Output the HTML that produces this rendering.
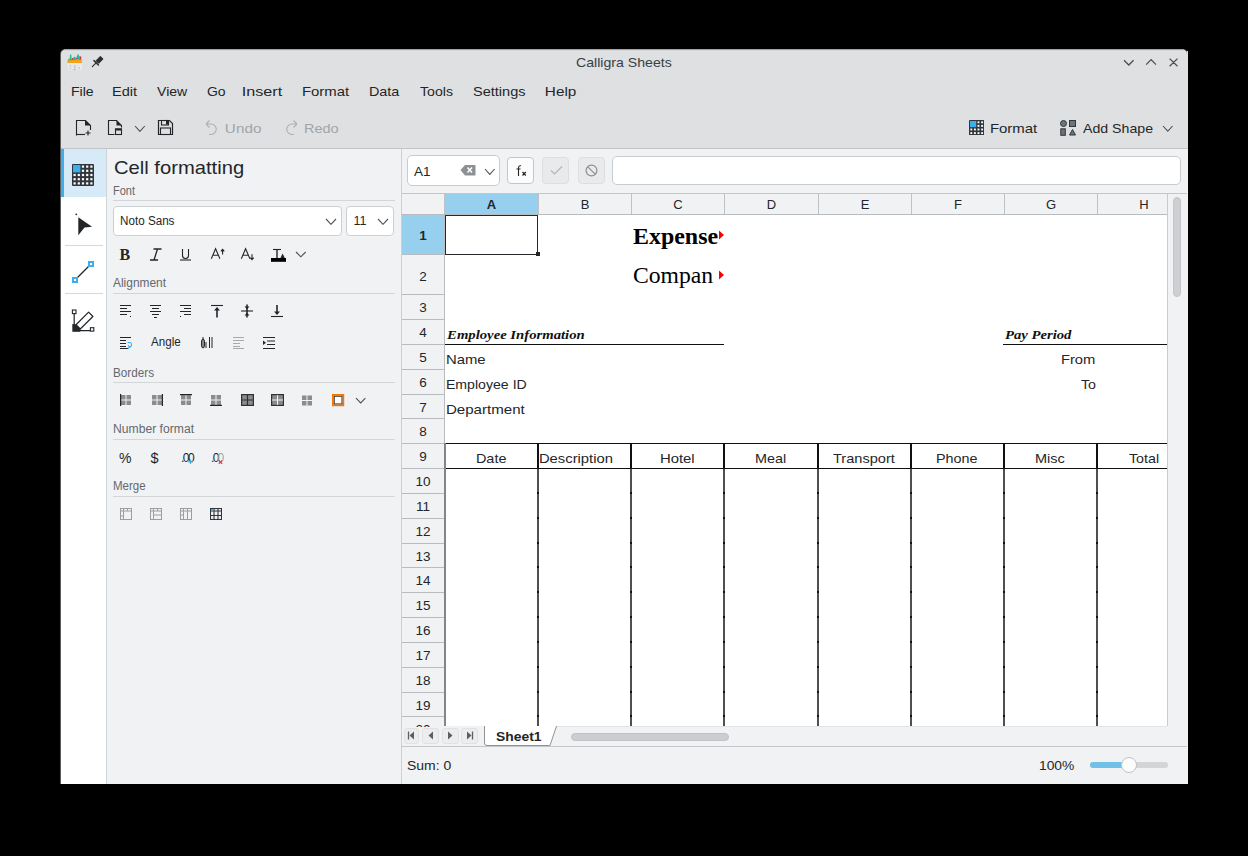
<!DOCTYPE html>
<html><head><meta charset="utf-8"><style>
html,body{margin:0;padding:0}
body{width:1248px;height:856px;background:#000;position:relative;overflow:hidden;font-family:"Liberation Sans",sans-serif}
body>div,body>svg{position:absolute;box-sizing:border-box}
.t{white-space:nowrap}
</style></head><body>
<div style="left:60px;top:49px;width:1128px;height:735px;background:#5a5d60;border-radius:5px 5px 0 0"></div>
<div style="left:61px;top:50px;width:1126px;height:98px;background:#dee0e2;border-radius:4px 4px 0 0"></div>
<div style="left:64px;top:49px;width:1120px;height:1px;background:#a2a4a7"></div>
<div style="left:63px;top:50px;width:1122px;height:1px;background:#d2d4d6"></div>
<div style="left:62px;top:51px;width:1124px;height:1px;background:#e3e4e6"></div>
<div style="left:61px;top:148px;width:1126px;height:1px;background:#c2c5c8"></div>
<div style="left:61px;top:149px;width:45px;height:634px;background:#fff"></div>
<div style="left:106px;top:149px;width:1px;height:634px;background:#d1d4d6"></div>
<div style="left:107px;top:149px;width:294px;height:634px;background:#f1f2f4"></div>
<div style="left:401px;top:149px;width:1px;height:634px;background:#cdd0d3"></div>
<div style="left:402px;top:149px;width:785px;height:634px;background:#f1f2f4"></div>
<div style="left:1187px;top:51px;width:1px;height:97px;background:#dee0e2"></div>
<div style="left:1187px;top:148px;width:1px;height:1px;background:#c2c5c8"></div>
<div style="left:1187px;top:149px;width:1px;height:635px;background:#f1f2f4"></div>
<div style="left:61px;top:783px;width:45px;height:1px;background:#fff"></div>
<div style="left:106px;top:783px;width:1px;height:1px;background:#d1d4d6"></div>
<div style="left:107px;top:783px;width:294px;height:1px;background:#f1f2f4"></div>
<div style="left:401px;top:783px;width:1px;height:1px;background:#cdd0d3"></div>
<div style="left:402px;top:783px;width:786px;height:1px;background:#f1f2f4"></div>
<div style="left:60px;top:783px;width:1px;height:1px;background:#5a5d60"></div>
<div style="left:61px;top:149px;width:45px;height:48px;background:#d6ebf7"></div>
<div style="left:61px;top:149px;width:3px;height:48px;background:#3daee9"></div>
<div style="left:65px;top:245px;width:38px;height:1px;background:#d5d8da"></div>
<div style="left:65px;top:293px;width:38px;height:1px;background:#d5d8da"></div>
<div style="left:113px;top:200px;width:282px;height:1px;background:#d3d6d8"></div>
<div style="left:113px;top:293px;width:282px;height:1px;background:#d3d6d8"></div>
<div style="left:113px;top:382px;width:282px;height:1px;background:#d3d6d8"></div>
<div style="left:113px;top:439px;width:282px;height:1px;background:#d3d6d8"></div>
<div style="left:113px;top:496px;width:282px;height:1px;background:#d3d6d8"></div>
<div style="left:113px;top:206px;width:227px;height:28px;background:#fff;border:1px solid #cdd0d3;border-radius:4px;box-sizing:content-box"></div>
<div style="left:346px;top:206px;width:46px;height:28px;background:#fff;border:1px solid #cdd0d3;border-radius:4px;box-sizing:content-box"></div>
<div style="left:407px;top:155px;width:93px;height:31px;background:#fff;border:1px solid #c9ccce;border-radius:5px"></div>
<div style="left:507px;top:157px;width:27px;height:27px;background:#fcfcfc;border:1px solid #c4c7ca;border-radius:4px"></div>
<div style="left:542px;top:157px;width:27px;height:27px;background:#e9eaeb;border:1px solid #dcdee0;border-radius:4px"></div>
<div style="left:578px;top:157px;width:27px;height:27px;background:#e9eaeb;border:1px solid #dcdee0;border-radius:4px"></div>
<div style="left:612px;top:156px;width:569px;height:29px;background:#fff;border:1px solid #c9ccce;border-radius:5px"></div>
<div style="left:402px;top:194px;width:765px;height:20px;background:#f1f2f4"></div>
<div style="left:402px;top:193px;width:785px;height:1px;background:#c4c7ca"></div>
<div style="left:401px;top:214px;width:766px;height:1px;background:#b9bcbf"></div>
<div style="left:445px;top:194px;width:93px;height:20px;background:#97d0ee"></div>
<div style="left:538px;top:194px;width:1px;height:20px;background:#bfc2c5"></div>
<div style="left:631px;top:194px;width:1px;height:20px;background:#bfc2c5"></div>
<div style="left:724px;top:194px;width:1px;height:20px;background:#bfc2c5"></div>
<div style="left:818px;top:194px;width:1px;height:20px;background:#bfc2c5"></div>
<div style="left:911px;top:194px;width:1px;height:20px;background:#bfc2c5"></div>
<div style="left:1004px;top:194px;width:1px;height:20px;background:#bfc2c5"></div>
<div style="left:1097px;top:194px;width:1px;height:20px;background:#bfc2c5"></div>
<div style="left:444px;top:194px;width:1px;height:20px;background:#bfc2c5"></div>
<div style="left:402px;top:215px;width:42px;height:511px;background:#f1f2f4"></div>
<div style="left:444px;top:215px;width:1px;height:511px;background:#b9bcbf"></div>
<div style="left:402px;top:215px;width:42px;height:39px;background:#97d0ee"></div>
<div style="left:402px;top:254px;width:42px;height:1px;background:#b9bcbf"></div>
<div style="left:402px;top:294px;width:42px;height:1px;background:#b9bcbf"></div>
<div style="left:402px;top:319px;width:42px;height:1px;background:#b9bcbf"></div>
<div style="left:402px;top:344px;width:42px;height:1px;background:#b9bcbf"></div>
<div style="left:402px;top:369px;width:42px;height:1px;background:#b9bcbf"></div>
<div style="left:402px;top:394px;width:42px;height:1px;background:#b9bcbf"></div>
<div style="left:402px;top:418px;width:42px;height:1px;background:#b9bcbf"></div>
<div style="left:402px;top:443px;width:42px;height:1px;background:#b9bcbf"></div>
<div style="left:402px;top:468px;width:42px;height:1px;background:#b9bcbf"></div>
<div style="left:402px;top:493px;width:42px;height:1px;background:#b9bcbf"></div>
<div style="left:402px;top:518px;width:42px;height:1px;background:#b9bcbf"></div>
<div style="left:402px;top:543px;width:42px;height:1px;background:#b9bcbf"></div>
<div style="left:402px;top:567px;width:42px;height:1px;background:#b9bcbf"></div>
<div style="left:402px;top:592px;width:42px;height:1px;background:#b9bcbf"></div>
<div style="left:402px;top:617px;width:42px;height:1px;background:#b9bcbf"></div>
<div style="left:402px;top:642px;width:42px;height:1px;background:#b9bcbf"></div>
<div style="left:402px;top:667px;width:42px;height:1px;background:#b9bcbf"></div>
<div style="left:402px;top:692px;width:42px;height:1px;background:#b9bcbf"></div>
<div style="left:402px;top:716px;width:42px;height:1px;background:#b9bcbf"></div>
<div style="left:445px;top:215px;width:722px;height:511px;background:#fff"></div>
<div style="left:1167px;top:194px;width:1px;height:532px;background:#c9ccce"></div>
<div style="left:1173px;top:197px;width:8px;height:100px;background:#cdcfd2;border:1px solid #c3c5c8;border-radius:4px"></div>
<div class="t" style="left:445px;top:195px;width:93px;height:20px;line-height:20px;text-align:center;font-size:13px;font-weight:bold;color:#232629">A</div>
<div class="t" style="left:539px;top:195px;width:92px;height:20px;line-height:20px;text-align:center;font-size:13px;font-weight:normal;color:#232629">B</div>
<div class="t" style="left:632px;top:195px;width:92px;height:20px;line-height:20px;text-align:center;font-size:13px;font-weight:normal;color:#232629">C</div>
<div class="t" style="left:725px;top:195px;width:93px;height:20px;line-height:20px;text-align:center;font-size:13px;font-weight:normal;color:#232629">D</div>
<div class="t" style="left:819px;top:195px;width:92px;height:20px;line-height:20px;text-align:center;font-size:13px;font-weight:normal;color:#232629">E</div>
<div class="t" style="left:912px;top:195px;width:92px;height:20px;line-height:20px;text-align:center;font-size:13px;font-weight:normal;color:#232629">F</div>
<div class="t" style="left:1005px;top:195px;width:92px;height:20px;line-height:20px;text-align:center;font-size:13px;font-weight:normal;color:#232629">G</div>
<div class="t" style="left:1098px;top:195px;width:92px;height:20px;line-height:20px;text-align:center;font-size:13px;font-weight:normal;color:#232629">H</div>
<div class="t" style="left:402px;top:216.0px;width:42px;height:40.5px;line-height:40.5px;text-align:center;font-size:13.5px;font-weight:bold;color:#232629;overflow:hidden;clip-path:inset(0 0 0.0px 0)">1</div>
<div class="t" style="left:402px;top:256.5px;width:42px;height:39.8px;line-height:39.8px;text-align:center;font-size:13.5px;font-weight:normal;color:#232629;overflow:hidden;clip-path:inset(0 0 0.0px 0)">2</div>
<div class="t" style="left:402px;top:296.3px;width:42px;height:24.8px;line-height:24.8px;text-align:center;font-size:13.5px;font-weight:normal;color:#232629;overflow:hidden;clip-path:inset(0 0 0.0px 0)">3</div>
<div class="t" style="left:402px;top:321.1px;width:42px;height:24.8px;line-height:24.8px;text-align:center;font-size:13.5px;font-weight:normal;color:#232629;overflow:hidden;clip-path:inset(0 0 0.0px 0)">4</div>
<div class="t" style="left:402px;top:346.0px;width:42px;height:24.8px;line-height:24.8px;text-align:center;font-size:13.5px;font-weight:normal;color:#232629;overflow:hidden;clip-path:inset(0 0 0.0px 0)">5</div>
<div class="t" style="left:402px;top:370.8px;width:42px;height:24.8px;line-height:24.8px;text-align:center;font-size:13.5px;font-weight:normal;color:#232629;overflow:hidden;clip-path:inset(0 0 0.0px 0)">6</div>
<div class="t" style="left:402px;top:395.6px;width:42px;height:24.8px;line-height:24.8px;text-align:center;font-size:13.5px;font-weight:normal;color:#232629;overflow:hidden;clip-path:inset(0 0 0.0px 0)">7</div>
<div class="t" style="left:402px;top:420.4px;width:42px;height:24.8px;line-height:24.8px;text-align:center;font-size:13.5px;font-weight:normal;color:#232629;overflow:hidden;clip-path:inset(0 0 0.0px 0)">8</div>
<div class="t" style="left:402px;top:445.3px;width:42px;height:24.8px;line-height:24.8px;text-align:center;font-size:13.5px;font-weight:normal;color:#232629;overflow:hidden;clip-path:inset(0 0 0.0px 0)">9</div>
<div class="t" style="left:402px;top:470.1px;width:42px;height:24.8px;line-height:24.8px;text-align:center;font-size:13.5px;font-weight:normal;color:#232629;overflow:hidden;clip-path:inset(0 0 0.0px 0)">10</div>
<div class="t" style="left:402px;top:494.9px;width:42px;height:24.8px;line-height:24.8px;text-align:center;font-size:13.5px;font-weight:normal;color:#232629;overflow:hidden;clip-path:inset(0 0 0.0px 0)">11</div>
<div class="t" style="left:402px;top:519.8px;width:42px;height:24.8px;line-height:24.8px;text-align:center;font-size:13.5px;font-weight:normal;color:#232629;overflow:hidden;clip-path:inset(0 0 0.0px 0)">12</div>
<div class="t" style="left:402px;top:544.6px;width:42px;height:24.8px;line-height:24.8px;text-align:center;font-size:13.5px;font-weight:normal;color:#232629;overflow:hidden;clip-path:inset(0 0 0.0px 0)">13</div>
<div class="t" style="left:402px;top:569.4px;width:42px;height:24.8px;line-height:24.8px;text-align:center;font-size:13.5px;font-weight:normal;color:#232629;overflow:hidden;clip-path:inset(0 0 0.0px 0)">14</div>
<div class="t" style="left:402px;top:594.3px;width:42px;height:24.8px;line-height:24.8px;text-align:center;font-size:13.5px;font-weight:normal;color:#232629;overflow:hidden;clip-path:inset(0 0 0.0px 0)">15</div>
<div class="t" style="left:402px;top:619.1px;width:42px;height:24.8px;line-height:24.8px;text-align:center;font-size:13.5px;font-weight:normal;color:#232629;overflow:hidden;clip-path:inset(0 0 0.0px 0)">16</div>
<div class="t" style="left:402px;top:643.9px;width:42px;height:24.8px;line-height:24.8px;text-align:center;font-size:13.5px;font-weight:normal;color:#232629;overflow:hidden;clip-path:inset(0 0 0.0px 0)">17</div>
<div class="t" style="left:402px;top:668.8px;width:42px;height:24.8px;line-height:24.8px;text-align:center;font-size:13.5px;font-weight:normal;color:#232629;overflow:hidden;clip-path:inset(0 0 0.0px 0)">18</div>
<div class="t" style="left:402px;top:693.6px;width:42px;height:24.8px;line-height:24.8px;text-align:center;font-size:13.5px;font-weight:normal;color:#232629;overflow:hidden;clip-path:inset(0 0 0.0px 0)">19</div>
<div class="t" style="left:402px;top:718.4px;width:42px;height:24.8px;line-height:24.8px;text-align:center;font-size:13.5px;font-weight:normal;color:#232629;overflow:hidden;clip-path:inset(0 0 16.2px 0)">20</div>
<div style="left:445px;top:343.5px;width:279px;height:1.5px;background:#111"></div>
<div style="left:1003px;top:343.5px;width:164px;height:1.5px;background:#111"></div>
<div style="left:445px;top:442.5px;width:722px;height:1.5px;background:#111"></div>
<div style="left:445px;top:467.7px;width:722px;height:1.5px;background:#111"></div>
<div style="left:444.3px;top:442.5px;width:1.7px;height:283.5px;background:#858585"></div>
<div style="left:537px;top:443px;width:2px;height:25.5px;background:#111"></div>
<div style="left:537px;top:469px;width:2px;height:257px;background:#505050"></div>
<div style="left:537px;top:492px;width:2px;height:2px;background:#111"></div>
<div style="left:537px;top:517px;width:2px;height:2px;background:#111"></div>
<div style="left:537px;top:542px;width:2px;height:2px;background:#111"></div>
<div style="left:537px;top:566px;width:2px;height:2px;background:#111"></div>
<div style="left:537px;top:591px;width:2px;height:2px;background:#111"></div>
<div style="left:537px;top:616px;width:2px;height:2px;background:#111"></div>
<div style="left:537px;top:641px;width:2px;height:2px;background:#111"></div>
<div style="left:537px;top:666px;width:2px;height:2px;background:#111"></div>
<div style="left:537px;top:691px;width:2px;height:2px;background:#111"></div>
<div style="left:537px;top:715px;width:2px;height:2px;background:#111"></div>
<div style="left:630px;top:443px;width:2px;height:25.5px;background:#111"></div>
<div style="left:630px;top:469px;width:2px;height:257px;background:#505050"></div>
<div style="left:630px;top:492px;width:2px;height:2px;background:#111"></div>
<div style="left:630px;top:517px;width:2px;height:2px;background:#111"></div>
<div style="left:630px;top:542px;width:2px;height:2px;background:#111"></div>
<div style="left:630px;top:566px;width:2px;height:2px;background:#111"></div>
<div style="left:630px;top:591px;width:2px;height:2px;background:#111"></div>
<div style="left:630px;top:616px;width:2px;height:2px;background:#111"></div>
<div style="left:630px;top:641px;width:2px;height:2px;background:#111"></div>
<div style="left:630px;top:666px;width:2px;height:2px;background:#111"></div>
<div style="left:630px;top:691px;width:2px;height:2px;background:#111"></div>
<div style="left:630px;top:715px;width:2px;height:2px;background:#111"></div>
<div style="left:723px;top:443px;width:2px;height:25.5px;background:#111"></div>
<div style="left:723px;top:469px;width:2px;height:257px;background:#505050"></div>
<div style="left:723px;top:492px;width:2px;height:2px;background:#111"></div>
<div style="left:723px;top:517px;width:2px;height:2px;background:#111"></div>
<div style="left:723px;top:542px;width:2px;height:2px;background:#111"></div>
<div style="left:723px;top:566px;width:2px;height:2px;background:#111"></div>
<div style="left:723px;top:591px;width:2px;height:2px;background:#111"></div>
<div style="left:723px;top:616px;width:2px;height:2px;background:#111"></div>
<div style="left:723px;top:641px;width:2px;height:2px;background:#111"></div>
<div style="left:723px;top:666px;width:2px;height:2px;background:#111"></div>
<div style="left:723px;top:691px;width:2px;height:2px;background:#111"></div>
<div style="left:723px;top:715px;width:2px;height:2px;background:#111"></div>
<div style="left:816.5px;top:443px;width:2px;height:25.5px;background:#111"></div>
<div style="left:816.5px;top:469px;width:2px;height:257px;background:#505050"></div>
<div style="left:816.5px;top:492px;width:2px;height:2px;background:#111"></div>
<div style="left:816.5px;top:517px;width:2px;height:2px;background:#111"></div>
<div style="left:816.5px;top:542px;width:2px;height:2px;background:#111"></div>
<div style="left:816.5px;top:566px;width:2px;height:2px;background:#111"></div>
<div style="left:816.5px;top:591px;width:2px;height:2px;background:#111"></div>
<div style="left:816.5px;top:616px;width:2px;height:2px;background:#111"></div>
<div style="left:816.5px;top:641px;width:2px;height:2px;background:#111"></div>
<div style="left:816.5px;top:666px;width:2px;height:2px;background:#111"></div>
<div style="left:816.5px;top:691px;width:2px;height:2px;background:#111"></div>
<div style="left:816.5px;top:715px;width:2px;height:2px;background:#111"></div>
<div style="left:910px;top:443px;width:2px;height:25.5px;background:#111"></div>
<div style="left:910px;top:469px;width:2px;height:257px;background:#505050"></div>
<div style="left:910px;top:492px;width:2px;height:2px;background:#111"></div>
<div style="left:910px;top:517px;width:2px;height:2px;background:#111"></div>
<div style="left:910px;top:542px;width:2px;height:2px;background:#111"></div>
<div style="left:910px;top:566px;width:2px;height:2px;background:#111"></div>
<div style="left:910px;top:591px;width:2px;height:2px;background:#111"></div>
<div style="left:910px;top:616px;width:2px;height:2px;background:#111"></div>
<div style="left:910px;top:641px;width:2px;height:2px;background:#111"></div>
<div style="left:910px;top:666px;width:2px;height:2px;background:#111"></div>
<div style="left:910px;top:691px;width:2px;height:2px;background:#111"></div>
<div style="left:910px;top:715px;width:2px;height:2px;background:#111"></div>
<div style="left:1003px;top:443px;width:2px;height:25.5px;background:#111"></div>
<div style="left:1003px;top:469px;width:2px;height:257px;background:#505050"></div>
<div style="left:1003px;top:492px;width:2px;height:2px;background:#111"></div>
<div style="left:1003px;top:517px;width:2px;height:2px;background:#111"></div>
<div style="left:1003px;top:542px;width:2px;height:2px;background:#111"></div>
<div style="left:1003px;top:566px;width:2px;height:2px;background:#111"></div>
<div style="left:1003px;top:591px;width:2px;height:2px;background:#111"></div>
<div style="left:1003px;top:616px;width:2px;height:2px;background:#111"></div>
<div style="left:1003px;top:641px;width:2px;height:2px;background:#111"></div>
<div style="left:1003px;top:666px;width:2px;height:2px;background:#111"></div>
<div style="left:1003px;top:691px;width:2px;height:2px;background:#111"></div>
<div style="left:1003px;top:715px;width:2px;height:2px;background:#111"></div>
<div style="left:1096px;top:443px;width:2px;height:25.5px;background:#111"></div>
<div style="left:1096px;top:469px;width:2px;height:257px;background:#505050"></div>
<div style="left:1096px;top:492px;width:2px;height:2px;background:#111"></div>
<div style="left:1096px;top:517px;width:2px;height:2px;background:#111"></div>
<div style="left:1096px;top:542px;width:2px;height:2px;background:#111"></div>
<div style="left:1096px;top:566px;width:2px;height:2px;background:#111"></div>
<div style="left:1096px;top:591px;width:2px;height:2px;background:#111"></div>
<div style="left:1096px;top:616px;width:2px;height:2px;background:#111"></div>
<div style="left:1096px;top:641px;width:2px;height:2px;background:#111"></div>
<div style="left:1096px;top:666px;width:2px;height:2px;background:#111"></div>
<div style="left:1096px;top:691px;width:2px;height:2px;background:#111"></div>
<div style="left:1096px;top:715px;width:2px;height:2px;background:#111"></div>
<div style="left:445px;top:215px;width:93px;height:39.5px;border:1.5px solid #25292d;box-sizing:border-box"></div>
<div style="left:536px;top:252px;width:4px;height:4px;background:#232629"></div>
<svg style="position:absolute;left:718px;top:230px" width="7" height="10"><path d="M1 0.5 L6 5 L1 9.5Z" fill="#f00"/></svg>
<svg style="position:absolute;left:718px;top:270px" width="7" height="10"><path d="M1 0.5 L6 5 L1 9.5Z" fill="#f00"/></svg>
<div style="left:557px;top:726px;width:610px;height:1px;background:#e2e4e6"></div>
<div style="left:401px;top:746px;width:786px;height:1px;background:#c4c7ca"></div>
<div style="left:403.6px;top:727.5px;width:15.699999999999989px;height:16.7px;background:#eceded;border:1px solid #dfe1e3;border-radius:3px;box-sizing:border-box"></div>
<div style="left:422.3px;top:727.5px;width:16.69999999999999px;height:16.7px;background:#eceded;border:1px solid #dfe1e3;border-radius:3px;box-sizing:border-box"></div>
<div style="left:442px;top:727.5px;width:17px;height:16.7px;background:#eceded;border:1px solid #dfe1e3;border-radius:3px;box-sizing:border-box"></div>
<div style="left:461.4px;top:727.5px;width:16.600000000000023px;height:16.7px;background:#eceded;border:1px solid #dfe1e3;border-radius:3px;box-sizing:border-box"></div>
<svg style="position:absolute;left:480px;top:725px" width="80" height="22"><path d="M4.5 1 V18 Q4.5 20.5 7 20.5 H70 L76.5 1" fill="#fff" stroke="#8f9296" stroke-width="1"/></svg>
<div style="left:571px;top:732.5px;width:157.5px;height:8px;background:#cbcdd0;border:1px solid #c0c3c6;border-radius:5px;box-sizing:border-box"></div>
<div style="left:1089.7px;top:762px;width:78px;height:5.5px;background:#d3d5d7;border-radius:3px"></div>
<div style="left:1089.7px;top:762px;width:40px;height:5.5px;background:#71c0e8;border-radius:3px 0 0 3px"></div>
<div style="left:1120.5px;top:756.5px;width:16px;height:16px;box-sizing:border-box;border-radius:50%;background:#fcfcfc;border:1px solid #c0c3c6"></div>
<svg style="position:absolute;left:67px;top:54px;" width="16" height="17" viewBox="0 0 16 17"><rect x="0.3" y="8.8" width="15" height="8" rx="0.5" fill="#eceef0" stroke="#d5d8db" stroke-width="0.6"/><path d="M1.5 11h12.5M1.5 13.2h12.5M1.5 15.3h12.5M5 9.5v6.5M10 9.5v6.5" stroke="#d9dcdf" stroke-width="0.5"/><path d="M2.5 11.8h1.2M7 12h1.5M11.5 14h1.5M6.5 15.6h2" stroke="#e36d75" stroke-width="0.7"/><path d="M7 13.8h1.5M2.5 14.2h1" stroke="#58c79c" stroke-width="0.7"/><path d="M0.8 9 V5.5 L2.5 4.8 L3.2 0.6 L4.3 0.6 L4.6 5 L7 3.2 L8.3 2.6 L8.8 5 L10.6 0.6 L11.9 0.6 L12.2 6 L12.5 9Z" fill="#1dbf97"/><path d="M5 9 V4.2 L6.5 4 V9Z M9 9 V4.3 L10.6 4 V9Z M12.3 9 V2.2 L14.3 2.6 V9Z" fill="#d9374b"/><path d="M0.8 9 V6.8 L2.6 5.8 L4.6 6.6 L6.3 5.4 L8.2 6.3 L10.2 5 L12.5 5.8 L14.4 5.4 V9Z" fill="#f7a21b"/></svg>
<svg style="position:absolute;left:91px;top:56px;" width="13" height="12" viewBox="0 0 13 12"><g transform="translate(8.4 4) rotate(45)"><rect x="-2.2" y="-3.6" width="4.4" height="6.8" rx="0.6" fill="#2b2f33"/></g><path d="M3 4.6 L7.4 9" stroke="#2b2f33" stroke-width="1.5" stroke-linecap="round"/><path d="M4.6 7.3 L1.3 10.6" stroke="#2b2f33" stroke-width="1.2" stroke-linecap="round"/></svg>
<svg style="position:absolute;left:1120px;top:56px;" width="60" height="13" viewBox="0 0 60 13"><path d="M4 4.2 L8.8 9 L13.6 4.2 M26.2 8.6 L31.1 3.6 L36 8.6 M49.6 2.6 L57.5 10.3 M57.5 2.6 L49.6 10.3" fill="none" stroke="#4a4f54" stroke-width="1.25"/></svg>
<svg style="position:absolute;left:75px;top:119px;" width="17" height="17" viewBox="0 0 17 17"><path d="M1.5 16.5 V1.5 H10.5 L15.5 6.5 V11" fill="none" stroke="#232629" stroke-width="1.1"/><path d="M1 15.5 H10" stroke="#232629" stroke-width="1.1"/><path d="M10 1 L15.5 6.5 H10Z" fill="#232629"/><path d="M13 11.5 V16.5 M10.5 14 H15.5" stroke="#232629" stroke-width="1.1"/></svg>
<svg style="position:absolute;left:107px;top:119px;" width="16" height="17" viewBox="0 0 16 17"><path d="M7.5 15.5 H1.5 V1.5 H9.5 L14.5 6.5 V8.5" fill="none" stroke="#232629" stroke-width="1.1"/><path d="M9.5 1 L14.5 6.5 H9.5Z" fill="#232629"/><rect x="8.5" y="10" width="6" height="5.5" fill="none" stroke="#232629" stroke-width="1.1"/><rect x="8" y="9.5" width="7" height="2" fill="#232629"/></svg>
<svg style="position:absolute;left:134px;top:124.5px;" width="11.8" height="7.4" viewBox="0 0 11.8 7.4"><path d="M1 1 L5.9 6.4 L10.8 1" fill="none" stroke="#4d5256" stroke-width="1.1"/></svg>
<svg style="position:absolute;left:157px;top:119px;" width="17" height="17" viewBox="0 0 17 17"><path d="M1.5 1.5 H12.5 L15.5 4.5 V15.5 H1.5Z" fill="none" stroke="#232629" stroke-width="1.2"/><rect x="4.5" y="1.5" width="7" height="4.5" fill="none" stroke="#232629" stroke-width="1.1"/><rect x="9" y="2" width="2.5" height="3.5" fill="#232629"/><rect x="3.5" y="9" width="10" height="6.5" fill="none" stroke="#232629" stroke-width="1.1"/></svg>
<svg style="position:absolute;left:204px;top:119px;" width="15" height="17" viewBox="0 0 15 17"><path d="M2 5 L5.5 1.5 M2 5 L5.5 8.5 M2 5 H7 A5 5 0 0 1 7 15.5 H5" fill="none" stroke="#aeb0b3" stroke-width="1.1"/></svg>
<svg style="position:absolute;left:284px;top:119px;" width="15" height="17" viewBox="0 0 15 17"><path d="M13 5 L9.5 1.5 M13 5 L9.5 8.5 M13 5 H8 A5 5 0 0 0 8 15.5 H10" fill="none" stroke="#aeb0b3" stroke-width="1.1"/></svg>
<svg style="position:absolute;left:969px;top:120px;" width="15.4" height="15.4" viewBox="0 0 15.4 15.4"><rect x="0" y="0" width="15.4" height="15.4" rx="1" fill="#31363b"/><rect x="8.55" y="1.35" width="1.9" height="1.9" fill="#fcfcfc"/><rect x="12.15" y="1.35" width="1.9" height="1.9" fill="#fcfcfc"/><rect x="8.55" y="4.95" width="1.9" height="1.9" fill="#fcfcfc"/><rect x="12.15" y="4.95" width="1.9" height="1.9" fill="#fcfcfc"/><rect x="1.35" y="8.55" width="1.9" height="1.9" fill="#fcfcfc"/><rect x="4.95" y="8.55" width="1.9" height="1.9" fill="#fcfcfc"/><rect x="8.55" y="8.55" width="1.9" height="1.9" fill="#fcfcfc"/><rect x="12.15" y="8.55" width="1.9" height="1.9" fill="#fcfcfc"/><rect x="1.35" y="12.15" width="1.9" height="1.9" fill="#fcfcfc"/><rect x="4.95" y="12.15" width="1.9" height="1.9" fill="#fcfcfc"/><rect x="8.55" y="12.15" width="1.9" height="1.9" fill="#fcfcfc"/><rect x="12.15" y="12.15" width="1.9" height="1.9" fill="#fcfcfc"/><rect x="1" y="1" width="6.2" height="6.2" fill="#3daee9"/></svg>
<svg style="position:absolute;left:1060px;top:120px;" width="17" height="16" viewBox="0 0 17 16"><circle cx="3.5" cy="3.5" r="3" fill="#6f7377" stroke="#31363b" stroke-width="1"/><rect x="9.5" y="0.5" width="6" height="6" fill="#6f7377" stroke="#31363b" stroke-width="1"/><rect x="0.8" y="8.8" width="4.5" height="6.5" fill="#6f7377" stroke="#31363b" stroke-width="1"/><path d="M9.5 15 L12.5 9.5 L15.5 15Z" fill="#6f7377" stroke="#31363b" stroke-width="1"/></svg>
<svg style="position:absolute;left:1162.3px;top:124.5px;" width="11.6" height="7.2" viewBox="0 0 11.6 7.2"><path d="M1 1 L5.8 6.2 L10.6 1" fill="none" stroke="#4d5256" stroke-width="1.1"/></svg>
<svg style="position:absolute;left:72px;top:164px;" width="22.0" height="22.0" viewBox="0 0 22.0 22.0"><rect x="0" y="0" width="22.0" height="22.0" rx="1" fill="#31363b"/><rect x="9.90" y="1.50" width="2.2" height="2.2" fill="#fcfcfc"/><rect x="14.10" y="1.50" width="2.2" height="2.2" fill="#fcfcfc"/><rect x="18.30" y="1.50" width="2.2" height="2.2" fill="#fcfcfc"/><rect x="9.90" y="5.70" width="2.2" height="2.2" fill="#fcfcfc"/><rect x="14.10" y="5.70" width="2.2" height="2.2" fill="#fcfcfc"/><rect x="18.30" y="5.70" width="2.2" height="2.2" fill="#fcfcfc"/><rect x="1.50" y="9.90" width="2.2" height="2.2" fill="#fcfcfc"/><rect x="5.70" y="9.90" width="2.2" height="2.2" fill="#fcfcfc"/><rect x="9.90" y="9.90" width="2.2" height="2.2" fill="#fcfcfc"/><rect x="14.10" y="9.90" width="2.2" height="2.2" fill="#fcfcfc"/><rect x="18.30" y="9.90" width="2.2" height="2.2" fill="#fcfcfc"/><rect x="1.50" y="14.10" width="2.2" height="2.2" fill="#fcfcfc"/><rect x="5.70" y="14.10" width="2.2" height="2.2" fill="#fcfcfc"/><rect x="9.90" y="14.10" width="2.2" height="2.2" fill="#fcfcfc"/><rect x="14.10" y="14.10" width="2.2" height="2.2" fill="#fcfcfc"/><rect x="18.30" y="14.10" width="2.2" height="2.2" fill="#fcfcfc"/><rect x="1.50" y="18.30" width="2.2" height="2.2" fill="#fcfcfc"/><rect x="5.70" y="18.30" width="2.2" height="2.2" fill="#fcfcfc"/><rect x="9.90" y="18.30" width="2.2" height="2.2" fill="#fcfcfc"/><rect x="14.10" y="18.30" width="2.2" height="2.2" fill="#fcfcfc"/><rect x="18.30" y="18.30" width="2.2" height="2.2" fill="#fcfcfc"/><rect x="1" y="1" width="7.4" height="7.4" fill="#3daee9"/></svg>
<svg style="position:absolute;left:74px;top:212px;" width="20" height="25" viewBox="0 0 20 25"><circle cx="2.3" cy="2.3" r="0.9" fill="#232629"/><path d="M4.3 5.3 L18 14.8 L10.5 15.5 L4.3 23.3Z" fill="#232629"/></svg>
<svg style="position:absolute;left:71px;top:260px;" width="24" height="24" viewBox="0 0 24 24"><path d="M4 20 L20 4" stroke="#232629" stroke-width="1.2"/><rect x="1" y="17" width="6" height="6" fill="#3daee9"/><rect x="3" y="19" width="2" height="2" fill="#fff"/><rect x="17" y="1" width="6" height="6" fill="#3daee9"/><rect x="19" y="3" width="2" height="2" fill="#fff"/></svg>
<svg style="position:absolute;left:70px;top:308px;" width="26" height="26" viewBox="0 0 26 26"><path d="M4.2 5.6 V23 M4 22.6 H20.4" fill="none" stroke="#232629" stroke-width="1.2"/><rect x="2.4" y="2" width="3.6" height="3.6" fill="none" stroke="#232629" stroke-width="1.1"/><rect x="20.4" y="19.7" width="3.4" height="3.4" fill="none" stroke="#232629" stroke-width="1.1"/><path d="M2.3 23.8 V16 L5.5 16.2 L10.6 21.3 L10.2 23.8Z" fill="#232629"/><path d="M6.03 16.73 L18.6 4.2 L22.9 8.5 L10.27 20.97Z" fill="none" stroke="#232629" stroke-width="1.2" stroke-linejoin="round"/></svg>
<svg style="position:absolute;left:325px;top:218px;" width="12" height="7.3" viewBox="0 0 12 7.3"><path d="M1 1 L6.0 6.3 L11 1" fill="none" stroke="#4d5256" stroke-width="1.1"/></svg>
<svg style="position:absolute;left:377px;top:218px;" width="12" height="7.3" viewBox="0 0 12 7.3"><path d="M1 1 L6.0 6.3 L11 1" fill="none" stroke="#4d5256" stroke-width="1.1"/></svg>
<svg style="position:absolute;left:118px;top:247px;" width="16" height="15" viewBox="0 0 16 15"><text x="1.5" y="13" font-family="Liberation Serif" font-weight="bold" font-size="16" fill="#232629">B</text></svg>
<svg style="position:absolute;left:148px;top:247px;" width="16" height="15" viewBox="0 0 16 15"><path d="M5.5 2 H13.5 M2 13 H10 M9.5 2 L6 13" stroke="#232629" stroke-width="1.3" fill="none"/></svg>
<svg style="position:absolute;left:178px;top:247px;" width="16" height="15" viewBox="0 0 16 15"><path d="M4.5 2 V8.5 Q4.5 11.5 7.5 11.5 Q10.5 11.5 10.5 8.5 V2" stroke="#232629" stroke-width="1.1" fill="none"/><path d="M2 13 H13" stroke="#232629" stroke-width="1.1"/></svg>
<svg style="position:absolute;left:210px;top:247px;" width="16" height="14" viewBox="0 0 16 14"><path d="M1.3 11.8 L5.6 1.7 L9.9 11.8 M3 8.2 H8.2" stroke="#232629" stroke-width="1.1" fill="none"/><path d="M12.6 7.6 V2.6 M10.9 4.4 L12.6 2.3 L14.3 4.4" stroke="#232629" stroke-width="1.1" fill="none"/></svg>
<svg style="position:absolute;left:240px;top:247px;" width="16" height="15" viewBox="0 0 16 15"><path d="M1.3 11.8 L5.6 1.7 L9.9 11.8 M3 8.2 H8.2" stroke="#232629" stroke-width="1.1" fill="none"/><path d="M12 7.2 V12.4 M10.3 10.6 L12 12.7 L13.7 10.6" stroke="#232629" stroke-width="1.1" fill="none"/></svg>
<svg style="position:absolute;left:270px;top:247px;" width="18" height="16" viewBox="0 0 18 16"><path d="M3 2.5 H11" stroke="#232629" stroke-width="1.1" fill="none"/><path d="M7 2.5 V11" stroke="#232629" stroke-width="1.4"/><path d="M10.3 11.2 L12.6 6.4 L14.9 11.2Z" fill="#232629"/><rect x="1" y="11" width="15" height="3.8" fill="#000"/></svg>
<svg style="position:absolute;left:295.2px;top:251.3px;" width="11.7" height="6.8" viewBox="0 0 11.7 6.8"><path d="M1 1 L5.85 5.8 L10.7 1" fill="none" stroke="#4d5256" stroke-width="1.1"/></svg>
<svg style="position:absolute;left:119px;top:304px;" width="14" height="14" viewBox="0 0 14 14"><path d="M1 1.5 H12" stroke="#232629" stroke-width="1"/><path d="M1 4.5 H8" stroke="#232629" stroke-width="1"/><path d="M1 7.5 H12" stroke="#232629" stroke-width="1"/><path d="M1 10.5 H8" stroke="#232629" stroke-width="1"/><path d="M11 12.5 H12" stroke="#232629" stroke-width="1"/></svg>
<svg style="position:absolute;left:149px;top:304px;" width="14" height="14" viewBox="0 0 14 14"><path d="M1 1.5 H12" stroke="#232629" stroke-width="1"/><path d="M3 4.5 H10" stroke="#232629" stroke-width="1"/><path d="M1 7.5 H12" stroke="#232629" stroke-width="1"/><path d="M3 10.5 H10" stroke="#232629" stroke-width="1"/><path d="M5 13.5 H8" stroke="#232629" stroke-width="1"/></svg>
<svg style="position:absolute;left:179px;top:304px;" width="14" height="14" viewBox="0 0 14 14"><path d="M1 1.5 H12" stroke="#232629" stroke-width="1"/><path d="M5 4.5 H12" stroke="#232629" stroke-width="1"/><path d="M1 7.5 H12" stroke="#232629" stroke-width="1"/><path d="M5 10.5 H12" stroke="#232629" stroke-width="1"/><path d="M1 12.5 H2" stroke="#232629" stroke-width="1"/></svg>
<svg style="position:absolute;left:210px;top:304px;" width="14" height="14" viewBox="0 0 14 14"><path d="M1 1.5 H13" stroke="#232629" stroke-width="1.1"/><path d="M7 13.5 V4" stroke="#232629" stroke-width="1.6"/><path d="M4 6.5 L7 3 L10 6.5Z" fill="#232629"/></svg>
<svg style="position:absolute;left:240px;top:304px;" width="14" height="14" viewBox="0 0 14 14"><path d="M1 7 H13" stroke="#232629" stroke-width="1.1"/><path d="M7 0.5 V13.5" stroke="#232629" stroke-width="1.6"/><path d="M4.5 2.5 L7 5.3 L9.5 2.5Z M4.5 11.5 L7 8.7 L9.5 11.5Z" fill="#232629"/></svg>
<svg style="position:absolute;left:270px;top:304px;" width="14" height="14" viewBox="0 0 14 14"><path d="M1 12.5 H13" stroke="#232629" stroke-width="1.1"/><path d="M7 1 V10" stroke="#232629" stroke-width="1.6"/><path d="M4 7.5 L7 11 L10 7.5Z" fill="#232629"/></svg>
<svg style="position:absolute;left:119px;top:336px;" width="14" height="14" viewBox="0 0 14 14"><path d="M1 1.5 H12 M1 4.5 H7 M1 7.5 H7 M1 10.5 H7 M1 12.5 H9" stroke="#232629" stroke-width="1"/><path d="M8.5 6.5 H11 Q12.5 6.5 12.5 8.5 Q12.5 11 10.5 11" fill="none" stroke="#3daee9" stroke-width="1.1"/><path d="M9 9.5 L10.8 11 L9 12.8" fill="none" stroke="#3daee9" stroke-width="1.1"/></svg>
<svg style="position:absolute;left:200px;top:336px;" width="14" height="14" viewBox="0 0 14 14"><path d="M3 1 V12 M6 6 V12 M9.5 1 V12 M12 1 V12" stroke="#232629" stroke-width="1"/><path d="M1.5 6 Q1.5 3 3 3 Q4.5 3 4.5 6 V9 Q4.5 12 3 12 Q1.5 12 1.5 9Z" fill="none" stroke="#232629" stroke-width="1"/></svg>
<svg style="position:absolute;left:232px;top:336px;" width="14" height="14" viewBox="0 0 14 14"><path d="M1 1.5 H12" stroke="#a7aaad" stroke-width="1"/><path d="M1 4.5 H12" stroke="#a7aaad" stroke-width="1"/><path d="M1 7.5 H8" stroke="#a7aaad" stroke-width="1"/><path d="M1 10.5 H8" stroke="#a7aaad" stroke-width="1"/><path d="M1 12.5 H12" stroke="#a7aaad" stroke-width="1"/></svg>
<svg style="position:absolute;left:262px;top:336px;" width="14" height="14" viewBox="0 0 14 14"><path d="M1 1.5 H13 M5 5 H13 M5 8.5 H13 M1 12.5 H13" stroke="#232629" stroke-width="1.2"/><path d="M1 4.5 L4 6.8 L1 9Z" fill="#232629"/></svg>
<svg style="position:absolute;left:120px;top:394px;" width="12" height="12" viewBox="0 0 12 12"><rect x="1" y="1" width="4.5" height="4.5" fill="#8a8c8e"/><rect x="6.5" y="1" width="4.5" height="4.5" fill="#8a8c8e"/><rect x="1" y="6.5" width="4.5" height="4.5" fill="#8a8c8e"/><rect x="6.5" y="6.5" width="4.5" height="4.5" fill="#8a8c8e"/><path d="M0.6 0 V12" stroke="#232629" stroke-width="1.2"/></svg>
<svg style="position:absolute;left:151px;top:394px;" width="12" height="12" viewBox="0 0 12 12"><rect x="1" y="1" width="4.5" height="4.5" fill="#8a8c8e"/><rect x="6.5" y="1" width="4.5" height="4.5" fill="#8a8c8e"/><rect x="1" y="6.5" width="4.5" height="4.5" fill="#8a8c8e"/><rect x="6.5" y="6.5" width="4.5" height="4.5" fill="#8a8c8e"/><path d="M11.4 0 V12" stroke="#232629" stroke-width="1.2"/></svg>
<svg style="position:absolute;left:180px;top:394px;" width="12" height="12" viewBox="0 0 12 12"><rect x="1" y="1" width="4.5" height="4.5" fill="#8a8c8e"/><rect x="6.5" y="1" width="4.5" height="4.5" fill="#8a8c8e"/><rect x="1" y="6.5" width="4.5" height="4.5" fill="#8a8c8e"/><rect x="6.5" y="6.5" width="4.5" height="4.5" fill="#8a8c8e"/><path d="M0 0.6 H12" stroke="#232629" stroke-width="1.2"/></svg>
<svg style="position:absolute;left:210px;top:394px;" width="12" height="12" viewBox="0 0 12 12"><rect x="1" y="1" width="4.5" height="4.5" fill="#8a8c8e"/><rect x="6.5" y="1" width="4.5" height="4.5" fill="#8a8c8e"/><rect x="1" y="6.5" width="4.5" height="4.5" fill="#8a8c8e"/><rect x="6.5" y="6.5" width="4.5" height="4.5" fill="#8a8c8e"/><path d="M0 11.4 H12" stroke="#232629" stroke-width="1.2"/></svg>
<svg style="position:absolute;left:241px;top:394px;" width="13" height="12" viewBox="0 0 13 12"><rect x="0.6" y="0.6" width="11.8" height="10.8" fill="#8a8c8e" stroke="#2e3236" stroke-width="1.2"/><path d="M6.5 0 V12 M0 6 H13" stroke="#2e3236" stroke-width="1.2"/></svg>
<svg style="position:absolute;left:271px;top:394px;" width="13" height="12" viewBox="0 0 13 12"><rect x="0.6" y="0.6" width="11.8" height="10.8" fill="#8a8c8e" stroke="#2e3236" stroke-width="1.2"/><path d="M6.5 1 V11 M1 6 H12" stroke="#f0f0f0" stroke-width="1"/></svg>
<svg style="position:absolute;left:301px;top:395px;" width="12" height="11" viewBox="0 0 12 11"><rect x="1" y="0.5" width="4.5" height="4.5" fill="#8a8c8e"/><rect x="6.5" y="0.5" width="4.5" height="4.5" fill="#8a8c8e"/><rect x="1" y="6" width="4.5" height="4.5" fill="#8a8c8e"/><rect x="6.5" y="6" width="4.5" height="4.5" fill="#8a8c8e"/></svg>
<svg style="position:absolute;left:332px;top:394px;" width="13" height="13" viewBox="0 0 13 13"><rect x="0.9" y="0.9" width="10.4" height="10.4" fill="#fff" stroke="#f67400" stroke-width="1.8"/><rect x="2.3" y="2.3" width="7.6" height="7.6" fill="none" stroke="#31363b" stroke-width="0.9"/></svg>
<svg style="position:absolute;left:355px;top:397.4px;" width="11.4" height="7" viewBox="0 0 11.4 7"><path d="M1 1 L5.7 6 L10.4 1" fill="none" stroke="#4d5256" stroke-width="1.1"/></svg>
<svg style="position:absolute;left:119px;top:451px;" width="14" height="13" viewBox="0 0 14 13"><text x="0" y="11.5" font-family="Liberation Sans" font-size="14" fill="#232629">%</text></svg>
<svg style="position:absolute;left:150px;top:450px;" width="12" height="15" viewBox="0 0 12 15"><text x="0.5" y="12.8" font-family="Liberation Sans" font-size="14.5" fill="#232629">$</text></svg>
<svg style="position:absolute;left:181px;top:450px;" width="14" height="15" viewBox="0 0 14 15"><text x="0" y="11.5" font-family="Liberation Sans" font-size="12" letter-spacing="-1.5" fill="#232629">.00</text><path d="M9.5 9.5 V14 M7.2 11.8 H11.8" stroke="#3daee9" stroke-width="1.2"/></svg>
<svg style="position:absolute;left:211px;top:450px;" width="14" height="15" viewBox="0 0 14 15"><text x="0" y="11.5" font-family="Liberation Sans" font-size="12" letter-spacing="-1.5" fill="#232629">.0</text><text x="6.5" y="11.5" font-family="Liberation Sans" font-size="12" fill="#a0a3a6">0</text><path d="M7.8 10.5 L11.2 13.8 M11.2 10.5 L7.8 13.8" stroke="#da4453" stroke-width="1.2"/></svg>
<svg style="position:absolute;left:120px;top:508px;" width="12" height="12" viewBox="0 0 12 12"><rect x="0.5" y="0.5" width="11" height="11" fill="none" stroke="#9c9ea1" stroke-width="1"/><path d="M3.5 0.5 V11.5 M0.5 3 H11.5 M0.5 8 H3.5 M7.5 0.5 V3" stroke="#9c9ea1" stroke-width="1"/></svg>
<svg style="position:absolute;left:150px;top:508px;" width="12" height="12" viewBox="0 0 12 12"><rect x="0.5" y="0.5" width="11" height="11" fill="none" stroke="#9c9ea1" stroke-width="1"/><path d="M3.5 0.5 V11.5 M0.5 3 H11.5 M3.5 7 H11.5 M7.5 0.5 V3" stroke="#9c9ea1" stroke-width="1"/></svg>
<svg style="position:absolute;left:180px;top:508px;" width="12" height="12" viewBox="0 0 12 12"><rect x="0.5" y="0.5" width="11" height="11" fill="none" stroke="#9c9ea1" stroke-width="1"/><path d="M3.5 0.5 V11.5 M0.5 3 H11.5 M7.5 0.5 V11.5 M0.5 7 H3.5" stroke="#9c9ea1" stroke-width="1"/></svg>
<svg style="position:absolute;left:210px;top:508px;" width="12" height="12" viewBox="0 0 12 12"><rect x="0.5" y="0.5" width="11" height="11" fill="none" stroke="#31363b" stroke-width="1.1"/><path d="M4 0.5 V11.5 M8 0.5 V11.5 M0.5 3 H11.5 M0.5 7.5 H11.5" stroke="#31363b" stroke-width="1.1"/><rect x="1" y="1" width="2.6" height="1.7" fill="#3daee9"/></svg>
<svg style="position:absolute;left:460px;top:164px;" width="16" height="13" viewBox="0 0 16 13"><path d="M0.5 6 L5 1 H15.5 V11.5 H5Z" fill="#8e9194"/><path d="M7.5 3.5 L12 8.5 M12 3.5 L7.5 8.5" stroke="#fff" stroke-width="1.5"/></svg>
<svg style="position:absolute;left:483.5px;top:167.5px;" width="11.6" height="7.4" viewBox="0 0 11.6 7.4"><path d="M1 1 L5.8 6.4 L10.6 1" fill="none" stroke="#4d5256" stroke-width="1.1"/></svg>
<svg style="position:absolute;left:515px;top:165px;" width="13" height="12" viewBox="0 0 13 12"><path d="M6 0.8 Q3.5 0.5 3.5 3 V11 M1.5 4 H5.5" fill="none" stroke="#232629" stroke-width="1.1"/><path d="M7.5 7 L10.8 10.5 M10.8 7 L7.5 10.5" stroke="#232629" stroke-width="1.2"/></svg>
<svg style="position:absolute;left:550px;top:165px;" width="13" height="11" viewBox="0 0 13 11"><path d="M1 5.5 L4.5 9 L12 1.5" fill="none" stroke="#b2b4b7" stroke-width="1.2"/></svg>
<svg style="position:absolute;left:585px;top:164px;" width="13" height="13" viewBox="0 0 13 13"><circle cx="6.5" cy="6.5" r="5.4" fill="none" stroke="#8c8f92" stroke-width="1.2"/><path d="M2.8 2.8 L10.2 10.2" stroke="#8c8f92" stroke-width="1.2"/></svg>
<svg style="position:absolute;left:407px;top:731px;" width="8" height="9" viewBox="0 0 8 9"><path d="M1.5 0.5 V8.5" stroke="#5b5f63" stroke-width="1.3"/><path d="M7 0.5 V8.5 L2.5 4.5Z" fill="#5b5f63"/></svg>
<svg style="position:absolute;left:428px;top:731px;" width="6" height="9" viewBox="0 0 6 9"><path d="M5 0.5 V8.5 L0.5 4.5Z" fill="#5b5f63"/></svg>
<svg style="position:absolute;left:447px;top:731px;" width="6" height="9" viewBox="0 0 6 9"><path d="M1 0.5 V8.5 L5.5 4.5Z" fill="#5b5f63"/></svg>
<svg style="position:absolute;left:466px;top:731px;" width="8" height="9" viewBox="0 0 8 9"><path d="M1 0.5 V8.5 L5.5 4.5Z" fill="#5b5f63"/><path d="M6.5 0.5 V8.5" stroke="#5b5f63" stroke-width="1.3"/></svg>
<div class="t" style="left:576.30px;top:55.66px;font:normal normal 13.5px 'Liberation Sans';line-height:13.5px;transform:scaleX(1.0458);transform-origin:0.00px 0;color:#3a3e42">Calligra Sheets</div>
<div class="t" style="left:70.50px;top:84.66px;font:normal normal 13.5px 'Liberation Sans';line-height:13.5px;transform:scaleX(1.0472);transform-origin:1.00px 0;color:#232629">File</div>
<div class="t" style="left:111.70px;top:84.66px;font:normal normal 13.5px 'Liberation Sans';line-height:13.5px;transform:scaleX(1.0794);transform-origin:1.00px 0;color:#232629">Edit</div>
<div class="t" style="left:156.50px;top:84.66px;font:normal normal 13.5px 'Liberation Sans';line-height:13.5px;transform:scaleX(1.0421);transform-origin:0.00px 0;color:#232629">View</div>
<div class="t" style="left:206.50px;top:84.66px;font:normal normal 13.5px 'Liberation Sans';line-height:13.5px;transform:scaleX(1.0342);transform-origin:0.00px 0;color:#232629">Go</div>
<div class="t" style="left:242.00px;top:84.66px;font:normal normal 13.5px 'Liberation Sans';line-height:13.5px;transform:scaleX(1.1965);transform-origin:1.00px 0;color:#232629">Insert</div>
<div class="t" style="left:302.20px;top:84.66px;font:normal normal 13.5px 'Liberation Sans';line-height:13.5px;transform:scaleX(1.1047);transform-origin:1.00px 0;color:#232629">Format</div>
<div class="t" style="left:369.00px;top:84.66px;font:normal normal 13.5px 'Liberation Sans';line-height:13.5px;transform:scaleX(1.0675);transform-origin:1.00px 0;color:#232629">Data</div>
<div class="t" style="left:420.30px;top:84.66px;font:normal normal 13.5px 'Liberation Sans';line-height:13.5px;transform:scaleX(1.0452);transform-origin:0.00px 0;color:#232629">Tools</div>
<div class="t" style="left:473.20px;top:84.66px;font:normal normal 13.5px 'Liberation Sans';line-height:13.5px;transform:scaleX(1.0769);transform-origin:0.00px 0;color:#232629">Settings</div>
<div class="t" style="left:544.50px;top:84.66px;font:normal normal 13.5px 'Liberation Sans';line-height:13.5px;transform:scaleX(1.1350);transform-origin:1.00px 0;color:#232629">Help</div>
<div class="t" style="left:224.90px;top:121.66px;font:normal normal 13.5px 'Liberation Sans';line-height:13.5px;transform:scaleX(1.1311);transform-origin:1.00px 0;color:#a2a5a8">Undo</div>
<div class="t" style="left:304.00px;top:121.66px;font:normal normal 13.5px 'Liberation Sans';line-height:13.5px;transform:scaleX(1.0726);transform-origin:1.00px 0;color:#a2a5a8">Redo</div>
<div class="t" style="left:990.30px;top:121.66px;font:normal normal 13.5px 'Liberation Sans';line-height:13.5px;transform:scaleX(1.1070);transform-origin:1.00px 0;color:#232629">Format</div>
<div class="t" style="left:1082.60px;top:121.66px;font:normal normal 13.5px 'Liberation Sans';line-height:13.5px;transform:scaleX(1.0483);transform-origin:0.00px 0;color:#232629">Add Shape</div>
<div class="t" style="left:113.50px;top:158.24px;font:normal normal 19px 'Liberation Sans';line-height:19px;transform:scaleX(1.0622);transform-origin:0.00px 0;color:#232629">Cell formatting</div>
<div class="t" style="left:113.30px;top:184.62px;font:normal normal 12.0px 'Liberation Sans';line-height:12.0px;transform:scaleX(0.9158);transform-origin:0.00px 0;color:#65686c">Font</div>
<div class="t" style="left:113.30px;top:276.62px;font:normal normal 12.0px 'Liberation Sans';line-height:12.0px;transform:scaleX(0.9939);transform-origin:0.00px 0;color:#65686c">Alignment</div>
<div class="t" style="left:113.30px;top:366.52px;font:normal normal 12.0px 'Liberation Sans';line-height:12.0px;transform:scaleX(0.9758);transform-origin:0.00px 0;color:#65686c">Borders</div>
<div class="t" style="left:113.30px;top:423.02px;font:normal normal 12.0px 'Liberation Sans';line-height:12.0px;transform:scaleX(1.0125);transform-origin:0.00px 0;color:#65686c">Number format</div>
<div class="t" style="left:113.30px;top:480.02px;font:normal normal 12.0px 'Liberation Sans';line-height:12.0px;transform:scaleX(0.9610);transform-origin:0.00px 0;color:#65686c">Merge</div>
<div class="t" style="left:119.50px;top:215.00px;font:normal normal 12.5px 'Liberation Sans';line-height:12.5px;transform:scaleX(0.9314);transform-origin:1.00px 0;color:#232629">Noto Sans</div>
<div class="t" style="left:353.50px;top:214.90px;font:normal normal 12.5px 'Liberation Sans';line-height:12.5px;letter-spacing:0.000px;color:#232629">11</div>
<div class="t" style="left:151.20px;top:336.20px;font:normal normal 12.5px 'Liberation Sans';line-height:12.5px;transform:scaleX(0.9276);transform-origin:0.00px 0;color:#232629">Angle</div>
<div class="t" style="left:414.20px;top:165.46px;font:normal normal 13.5px 'Liberation Sans';line-height:13.5px;transform:scaleX(0.9997);transform-origin:0.00px 0;color:#232629">A1</div>
<div class="t" style="left:633.10px;top:224.58px;font:normal bold 23px 'Liberation Serif';line-height:23px;transform:scaleX(1.0407);transform-origin:0.00px 0;color:#000">Expense</div>
<div class="t" style="left:633.40px;top:263.04px;font:normal normal 24px 'Liberation Serif';line-height:24px;transform:scaleX(0.9861);transform-origin:0.00px 0;color:#000">Compan</div>
<div class="t" style="left:447.00px;top:327.54px;font:italic bold 13.4px 'Liberation Serif';line-height:13.4px;transform:scaleX(1.0976);transform-origin:-1.00px 0;color:#111">Employee Information</div>
<div class="t" style="left:1005.20px;top:327.54px;font:italic bold 13.4px 'Liberation Serif';line-height:13.4px;transform:scaleX(1.0966);transform-origin:0.00px 0;color:#111">Pay Period</div>
<div class="t" style="left:445.50px;top:352.96px;font:normal normal 13.5px 'Liberation Sans';line-height:13.5px;transform:scaleX(1.1014);transform-origin:1.00px 0;color:#232629">Name</div>
<div class="t" style="left:445.50px;top:378.16px;font:normal normal 13.5px 'Liberation Sans';line-height:13.5px;transform:scaleX(1.0453);transform-origin:1.00px 0;color:#232629">Employee ID</div>
<div class="t" style="left:445.50px;top:402.96px;font:normal normal 13.5px 'Liberation Sans';line-height:13.5px;transform:scaleX(1.1192);transform-origin:1.00px 0;color:#232629">Department</div>
<div class="t" style="left:1061.00px;top:352.56px;font:normal normal 13.5px 'Liberation Sans';line-height:13.5px;transform:scaleX(1.0909);transform-origin:1.00px 0;color:#232629">From</div>
<div class="t" style="left:1080.50px;top:377.66px;font:normal normal 13.5px 'Liberation Sans';line-height:13.5px;transform:scaleX(1.0545);transform-origin:0.00px 0;color:#232629">To</div>
<div class="t" style="left:475.50px;top:452.46px;font:normal normal 13.5px 'Liberation Sans';line-height:13.5px;transform:scaleX(1.0701);transform-origin:1.00px 0;color:#232629">Date</div>
<div class="t" style="left:539.20px;top:452.46px;font:normal normal 13.5px 'Liberation Sans';line-height:13.5px;transform:scaleX(1.0967);transform-origin:1.00px 0;color:#232629">Description</div>
<div class="t" style="left:659.70px;top:452.46px;font:normal normal 13.5px 'Liberation Sans';line-height:13.5px;transform:scaleX(1.1011);transform-origin:1.00px 0;color:#232629">Hotel</div>
<div class="t" style="left:754.80px;top:452.46px;font:normal normal 13.5px 'Liberation Sans';line-height:13.5px;transform:scaleX(1.0650);transform-origin:1.00px 0;color:#232629">Meal</div>
<div class="t" style="left:833.00px;top:452.46px;font:normal normal 13.5px 'Liberation Sans';line-height:13.5px;transform:scaleX(1.0796);transform-origin:0.00px 0;color:#232629">Transport</div>
<div class="t" style="left:936.30px;top:452.46px;font:normal normal 13.5px 'Liberation Sans';line-height:13.5px;transform:scaleX(1.0632);transform-origin:1.00px 0;color:#232629">Phone</div>
<div class="t" style="left:1034.60px;top:452.46px;font:normal normal 13.5px 'Liberation Sans';line-height:13.5px;transform:scaleX(1.0743);transform-origin:1.00px 0;color:#232629">Misc</div>
<div class="t" style="left:1128.70px;top:452.46px;font:normal normal 13.5px 'Liberation Sans';line-height:13.5px;transform:scaleX(1.0555);transform-origin:0.00px 0;color:#232629">Total</div>
<div class="t" style="left:496.00px;top:729.86px;font:normal bold 13.5px 'Liberation Sans';line-height:13.5px;transform:scaleX(1.0276);transform-origin:0.00px 0;color:#232629">Sheet1</div>
<div class="t" style="left:407.40px;top:759.08px;font:normal normal 13.0px 'Liberation Sans';line-height:13.0px;transform:scaleX(1.0744);transform-origin:0.00px 0;color:#232629">Sum: 0</div>
<div class="t" style="left:1038.90px;top:758.86px;font:normal normal 13.5px 'Liberation Sans';line-height:13.5px;transform:scaleX(1.0231);transform-origin:1.00px 0;color:#232629">100%</div>
</body></html>
